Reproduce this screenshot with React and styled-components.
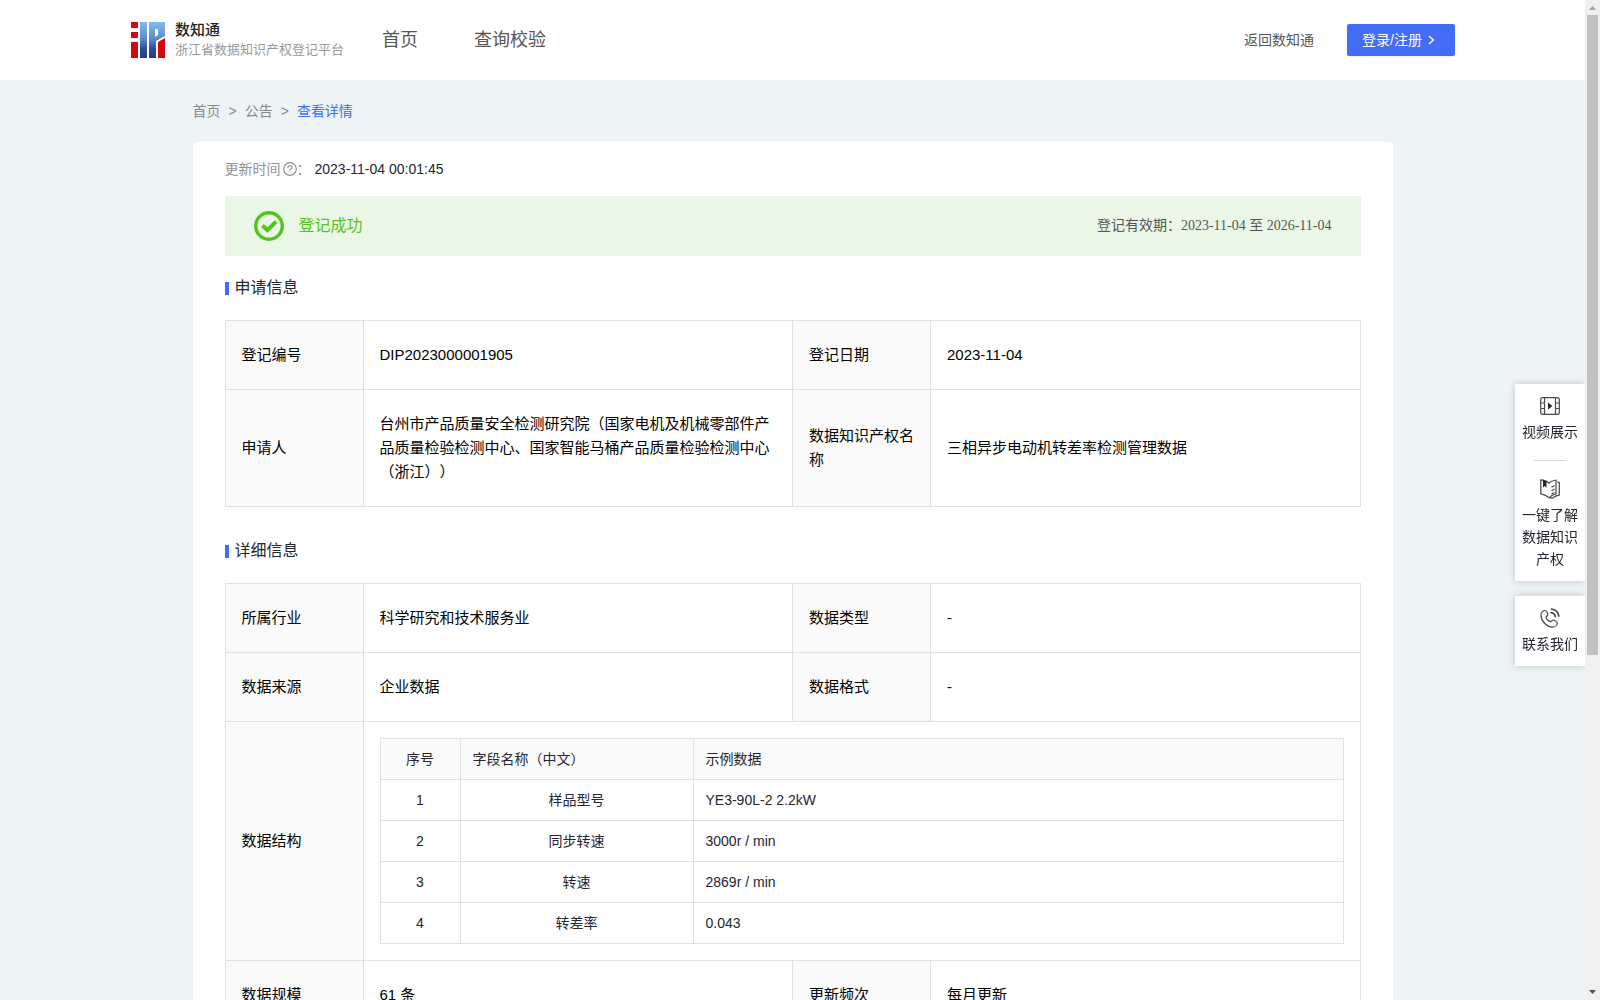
import React from "react";
import styled, { createGlobalStyle } from "styled-components";

const GlobalStyle = createGlobalStyle`
  * {
    box-sizing: border-box;
  }

  body {
    margin: 0;
    background: #eef3f6;
    color: #252632;
    font-family: "Liberation Sans", "Noto Sans CJK SC", sans-serif;
    font-size: 14px;
    line-height: 22px;
    text-spacing-trim: space-all;
  }
`;

const Window = styled.div`
  display: flex;
  height: 100vh;
`;

const Page = styled.div`
  flex: 1;
  min-width: 0;
  overflow: hidden;
`;

const Header = styled.header`
  display: flex;
  align-items: center;
  height: 80px;
  padding: 0 130px 0 131px;
  background: #fff;
`;

const Brand = styled.a`
  display: flex;
  align-items: center;
  gap: 10px;
  width: 251px;
  color: #999;
  font-size: 13px;
  line-height: 20px;
  text-decoration: none;
  white-space: nowrap;

  strong {
    display: block;
    color: #222;
    font-size: 15px;
    font-weight: 500;
  }
`;

const Nav = styled.nav`
  display: flex;
  flex: 1;
  gap: 56px;
`;

const NavLink = styled.a`
  color: #555;
  font-size: 18px;
  line-height: 24px;
  text-decoration: none;
`;

const BackLink = styled.a`
  margin-right: 33px;
  color: #555;
  text-decoration: none;
`;

const LoginButton = styled.button`
  display: flex;
  align-items: center;
  gap: 6px;
  width: 108px;
  height: 32px;
  padding: 0 15px;
  border: 0;
  border-radius: 2px;
  background: #446df6;
  box-shadow: 0 2px 0 rgba(0, 0, 0, 0.045);
  color: #fff;
  font: inherit;
  white-space: nowrap;
`;

const Main = styled.main`
  max-width: 1200px;
  margin: 0 auto;
`;

const Breadcrumb = styled.nav`
  display: flex;
  gap: 8px;
  padding: 20px 0;
  color: #888;
`;

const Crumb = styled.a`
  color: ${(props) => (props.$active ? "#446df6" : "#888")};
  text-decoration: none;
`;

const Card = styled.section`
  padding: 16px 32px 32px;
  border-radius: 4px;
  background: #fff;
`;

const UpdateTime = styled.div`
  display: flex;
  align-items: center;
  margin-bottom: 16px;
  color: #909399;

  svg {
    margin-left: 2px;
  }

  time {
    margin-left: 4px;
    color: #252632;
  }
`;

const Banner = styled.div`
  display: flex;
  align-items: center;
  height: 60px;
  padding: 0 29px;
  background: #ebf7e6;
`;

const BannerTitle = styled.span`
  flex: 1;
  margin-left: 15px;
  color: #52c41a;
  font-size: 16px;
`;

const Validity = styled.span`
  color: #555;
  font-family: "Liberation Serif", "Noto Sans CJK SC", serif;
`;

const SectionTitle = styled.h2`
  display: flex;
  align-items: center;
  gap: 6px;
  margin: ${(props) => (props.$first ? "20px" : "32px")} 0 20px;
  font-size: 16px;
  font-weight: 400;
  line-height: 24px;

  &::before {
    content: "";
    width: 4px;
    height: 13px;
    background: #446df6;
  }
`;

const InfoTable = styled.table`
  width: 100%;
  border-collapse: collapse;
  table-layout: fixed;
  color: #000;
  font-size: 15px;
  line-height: 24px;
`;

const LabelCol = styled.col`
  width: 138px;
`;

const Label = styled.th`
  padding: 22px 16px;
  border: 1px solid #e1e1e1;
  background: #fafafa;
  font-weight: 400;
  text-align: left;
`;

const Value = styled.td`
  padding: ${(props) => (props.$nested ? "16px" : "22px 16px")};
  border: 1px solid #e1e1e1;
`;

const FieldTable = styled.table`
  width: 100%;
  border-collapse: collapse;
  table-layout: fixed;
  color: #252632;
  font-size: 14px;
  line-height: 24px;
`;

const FieldCol = styled.col`
  width: ${(props) => props.$width}px;
`;

const FieldHead = styled.th`
  padding: 8px 12px;
  border: 1px solid #e1e1e1;
  background: #fafafa;
  font-weight: 400;
  text-align: ${(props) => props.$align || "left"};
`;

const FieldCell = styled.td`
  padding: 8px 12px;
  border: 1px solid #e1e1e1;
  text-align: ${(props) => props.$align || "left"};
`;

const SideBar = styled.aside`
  position: fixed;
  top: 384px;
  right: 15px;
  display: flex;
  flex-direction: column;
  gap: 15px;
  width: 70px;
  clip-path: inset(-12px 0 -12px -12px);
`;

const SideCard = styled.div`
  padding: 0 7px;
  background: #fff;
  box-shadow: 0 0 8px rgba(0, 0, 0, 0.2);
`;

const SideItem = styled.a`
  display: flex;
  flex-direction: column;
  align-items: center;
  gap: 5px;
  padding: 12px 0 11px;
  color: #252632;
  text-align: center;
  text-decoration: none;
`;

const SideDivider = styled.hr`
  width: 32px;
  height: 1px;
  margin: 6px auto;
  border: 0;
  background: #dcdcdc;
`;

const ScrollTrack = styled.div`
  display: flex;
  flex-direction: column;
  align-items: center;
  width: 15px;
  background: #f0f0f0;
`;

const ScrollArrow = styled.svg`
  flex: none;
  width: 15px;
  height: 15px;
`;

const ScrollSpace = styled.div`
  flex: 1;
  width: 11px;
`;

const ScrollThumb = styled.div`
  height: 66%;
  background: #c1c1c1;
`;

const fields = [
    { name: "样品型号", sample: "YE3-90L-2 2.2kW" },
    { name: "同步转速", sample: "3000r / min" },
    { name: "转速", sample: "2869r / min" },
    { name: "转差率", sample: "0.043" },
];

const Logo = () => (
    <svg width="34" height="36" viewBox="0 0 34 36" aria-hidden="true">
        <defs>
            <linearGradient id="blue" x1="0" y1="0" x2="0" y2="1">
                <stop offset="0" stopColor="#86b8ea" />
                <stop offset="0.45" stopColor="#5a8fd0" />
                <stop offset="0.75" stopColor="#2b4c96" />
                <stop offset="1" stopColor="#233a86" />
            </linearGradient>
        </defs>
        <path d="M0 0h7v6H0zM0 10h7v6H0zM0 20h7v16H0z" fill="#d00a10" />
        <path d="M9 0h7v36H9zM18 0h16v14l-9 5v17h-7zM24 7v8l3-2V7z" fill="url(#blue)" fillRule="evenodd" />
        <path d="M27 20l7-4v20h-7z" fill="#d00a10" />
    </svg>
);

const InfoRow = ({ items }) => (
    <tr>
        {items.map(([label, value]) => (
            <React.Fragment key={label}>
                <Label scope="row">{label}</Label>
                <Value>{value}</Value>
            </React.Fragment>
        ))}
    </tr>
);

const InfoCols = () => (
    <colgroup>
        <LabelCol />
        <col />
        <LabelCol />
        <col />
    </colgroup>
);

const VideoIcon = () => (
    <svg width="20" height="20" viewBox="0 0 20 20" fill="none" stroke="#45464e" strokeWidth="1.2" aria-hidden="true">
        <rect x="0.7" y="1.7" width="18.6" height="16.6" rx="2" />
        <path d="M4.5 2v16M15.5 2v16M1 7h3.500M1 12.500h3.500M15.500 7H19M15.500 12.500H19" />
        <path d="M8 6.500v7l4.500-3.500z" fill="#252632" stroke="none" />
    </svg>
);

const BookIcon = () => (
    <svg width="20" height="20" viewBox="0 0 20 20" fill="none" stroke="#45464e" strokeWidth="1.2" strokeLinejoin="round" aria-hidden="true">
        <path d="M.8.8C4 .9 6.500 1.600 9 4c2-1.900 4.500-2.600 7-3v14c-2.700.4-5 1.600-7 3.600C6.500 16.600 4 15.200.8 14.800z" />
        <path d="M17 3l2.300.3v12.800c-2.800.3-5 1.200-6.800 3L9 18.600M11.500 8.200l3-1.700M11.500 11.700l3-1.700M11.500 15l3-1.500" />
        <path d="M3 1v7.600l1.800-1.500 1.700 2V2z" fill="#252632" stroke="none" />
    </svg>
);

const PhoneIcon = () => (
    <svg width="20" height="20" viewBox="0 0 20 20" fill="none" stroke="#45464e" strokeWidth="1.2" strokeLinecap="round" strokeLinejoin="round" aria-hidden="true">
        <path d="M5.200 2.500C3 2.500.8 4.500.9 7c.2 6 5.800 12 11.600 12.200 2.700 0 4.800-2 4.900-4.200 0-1-3-3-4.200-3-1.200 0-1.500 1.700-2.600 1.600C8.800 13.400 6.300 11 6 9.300c-.1-1.100 1.800-1.500 1.900-2.800C7.900 5.200 6.200 2.500 5.200 2.500z" />
        <path d="M11 4.600c2.300.3 3.900 1.800 4.300 4M11.300 1c4.200.5 7 3.200 7.600 7.200" strokeWidth="1.600" />
    </svg>
);

const App = () => {
    return (
        <Window>
            <GlobalStyle />
            <Page>
                <Header>
                    <Brand href="#">
                        <Logo />
                        <span>
                            <strong>数知通</strong>
                            浙江省数据知识产权登记平台
                        </span>
                    </Brand>
                    <Nav>
                        <NavLink href="#">首页</NavLink>
                        <NavLink href="#">查询校验</NavLink>
                    </Nav>
                    <BackLink href="#">返回数知通</BackLink>
                    <LoginButton type="button">
                        登录/注册
                        <svg width="7" height="10" viewBox="0 0 7 10" fill="none" stroke="#fff" strokeWidth="1.5" aria-hidden="true">
                            <path d="M1 1l4.300 4L1 9" />
                        </svg>
                    </LoginButton>
                </Header>

                <Main>
                    <Breadcrumb>
                        <Crumb href="#">首页</Crumb>
                        <span>&gt;</span>
                        <Crumb href="#">公告</Crumb>
                        <span>&gt;</span>
                        <Crumb href="#" $active>查看详情</Crumb>
                    </Breadcrumb>

                    <Card>
                        <UpdateTime>
                            更新时间
                            <svg width="14" height="14" viewBox="0 0 14 14" fill="none" stroke="#909399" strokeWidth="1.2" aria-hidden="true">
                                <circle cx="7" cy="7" r="6.3" />
                                <path d="M5 5.700C5 4.500 5.800 3.800 7 3.800s2 .7 2 1.700c0 1.300-2 1.500-2 2.900M7 9.400v1.200" />
                            </svg>
                            ：<time>2023-11-04 00:01:45</time>
                        </UpdateTime>

                        <Banner>
                            <svg width="30" height="30" viewBox="0 0 30 30" fill="none" stroke="#52c41a" aria-hidden="true">
                                <circle cx="15" cy="15" r="13.3" strokeWidth="3.4" />
                                <path d="M8.500 14.500l4.900 4.700 8.600-8.500" strokeWidth="4" />
                            </svg>
                            <BannerTitle>登记成功</BannerTitle>
                            <Validity>登记有效期：2023-11-04 至 2026-11-04</Validity>
                        </Banner>

                        <SectionTitle $first>申请信息</SectionTitle>
                        <InfoTable>
                            <InfoCols />
                            <tbody>
                                <InfoRow items={[["登记编号", "DIP2023000001905"], ["登记日期", "2023-11-04"]]} />
                                <InfoRow
                                    items={[
                                        ["申请人", "台州市产品质量安全检测研究院（国家电机及机械零部件产品质量检验检测中心、国家智能马桶产品质量检验检测中心（浙江））"],
                                        ["数据知识产权名称", "三相异步电动机转差率检测管理数据"],
                                    ]}
                                />
                            </tbody>
                        </InfoTable>

                        <SectionTitle>详细信息</SectionTitle>
                        <InfoTable>
                            <InfoCols />
                            <tbody>
                                <InfoRow items={[["所属行业", "科学研究和技术服务业"], ["数据类型", "-"]]} />
                                <InfoRow items={[["数据来源", "企业数据"], ["数据格式", "-"]]} />
                                <tr>
                                    <Label scope="row">数据结构</Label>
                                    <Value colSpan={3} $nested>
                                        <FieldTable>
                                            <colgroup>
                                                <FieldCol $width={80} />
                                                <FieldCol $width={233} />
                                                <col />
                                            </colgroup>
                                            <thead>
                                                <tr>
                                                    <FieldHead $align="center">序号</FieldHead>
                                                    <FieldHead>字段名称（中文）</FieldHead>
                                                    <FieldHead>示例数据</FieldHead>
                                                </tr>
                                            </thead>
                                            <tbody>
                                                {fields.map((field, index) => (
                                                    <tr key={field.name}>
                                                        <FieldCell $align="center">{index + 1}</FieldCell>
                                                        <FieldCell $align="center">{field.name}</FieldCell>
                                                        <FieldCell>{field.sample}</FieldCell>
                                                    </tr>
                                                ))}
                                            </tbody>
                                        </FieldTable>
                                    </Value>
                                </tr>
                                <InfoRow items={[["数据规模", "61 条"], ["更新频次", "每月更新"]]} />
                            </tbody>
                        </InfoTable>
                    </Card>
                </Main>
            </Page>

            <SideBar>
                <SideCard>
                    <SideItem href="#">
                        <VideoIcon />
                        视频展示
                    </SideItem>
                    <SideDivider />
                    <SideItem href="#">
                        <BookIcon />
                        一键了解数据知识产权
                    </SideItem>
                </SideCard>
                <SideCard>
                    <SideItem href="#">
                        <PhoneIcon />
                        联系我们
                    </SideItem>
                </SideCard>
            </SideBar>

            <ScrollTrack aria-hidden="true">
                <ScrollArrow viewBox="0 0 15 15">
                    <path d="M4 10l3.500-4L11 10z" fill="#a3a3a3" />
                </ScrollArrow>
                <ScrollSpace>
                    <ScrollThumb />
                </ScrollSpace>
                <ScrollArrow viewBox="0 0 15 15">
                    <path d="M4 5h7L7.500 9z" fill="#505050" />
                </ScrollArrow>
            </ScrollTrack>
        </Window>
    );
};

export default App;
